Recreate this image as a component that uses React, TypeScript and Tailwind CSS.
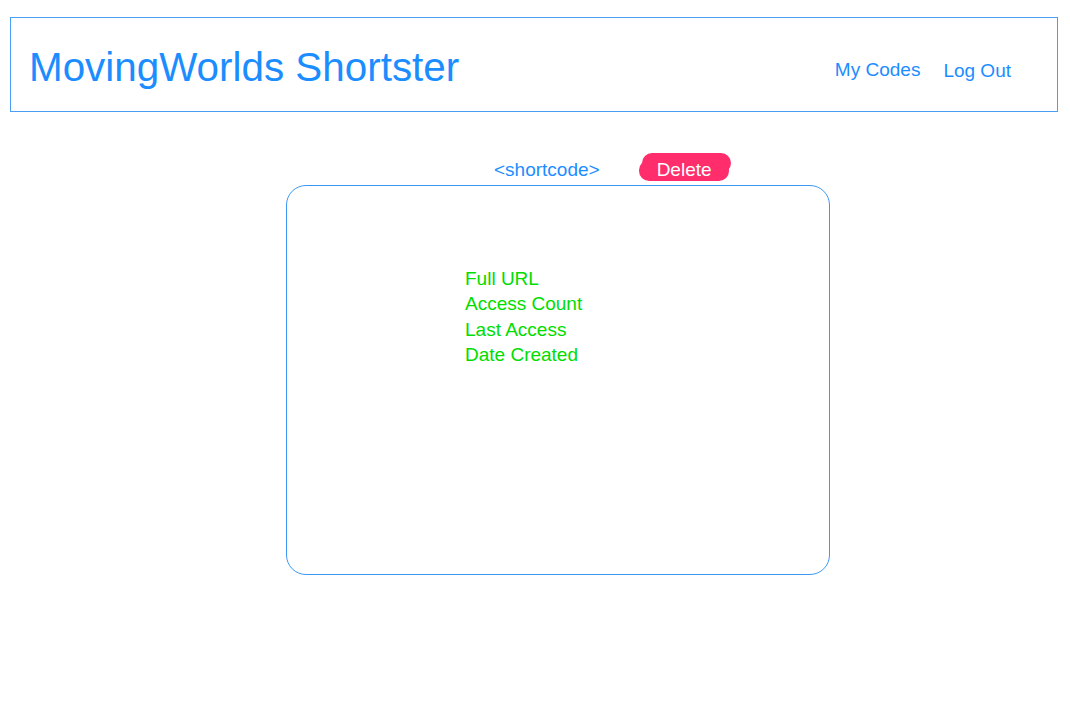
function Header() {
  return (
    <header className="ml-[10px] mt-[17px] flex h-[95px] w-[1048px] items-start justify-between border border-[#4a9ff5]">
      <h1 className="ml-[18px] mt-[26px] text-[40.4px] leading-[46px] text-[#1c8dff]">
        MovingWorlds Shortster
      </h1>
      <nav className="mr-[46px] mt-[41px] flex items-start gap-[23px] text-[19px] leading-[22px] text-[#1c8dff]">
        <a href="#">My Codes</a>
        <a href="#" className="mt-[1px]">
          Log Out
        </a>
      </nav>
    </header>
  );
}

function DeleteButton() {
  return (
    <button className="relative block h-[28px] w-[92px] text-left">
      <span className="absolute left-[3px] top-0 h-[20px] w-[89px] rounded-[10px] bg-[#ff2d6b]" />
      <span className="absolute left-0 top-[7px] h-[21px] w-[90px] rounded-[10px] bg-[#ff2d6b]" />
      <span className="relative ml-[18px] block pt-[6px] text-[19px] leading-[22px] text-white">
        Delete
      </span>
    </button>
  );
}

function Stats() {
  const rows = ["Full URL", "Access Count", "Last Access", "Date Created"];
  return (
    <ul className="pl-[178px] pt-[80px] text-[19px] leading-[25.3px] text-[#00dd00]">
      {rows.map((r) => (
        <li key={r}>{r}</li>
      ))}
    </ul>
  );
}

export default function App() {
  return (
    <div className="min-h-screen bg-white font-['Liberation_Sans',Arial,sans-serif]">
      <Header />
      <main className="ml-[286px] mt-[41px] w-[544px]">
        <div className="flex h-[28px] items-start">
          <span className="ml-[208px] mt-[6px] text-[19px] leading-[22px] text-[#1c8dff]">
            &lt;shortcode&gt;
          </span>
          <div className="ml-[39px] flex">
            <DeleteButton />
          </div>
        </div>
        <section className="mt-[4px] h-[390px] rounded-[20px] border border-[#3d97f4]">
          <Stats />
        </section>
      </main>
    </div>
  );
}
